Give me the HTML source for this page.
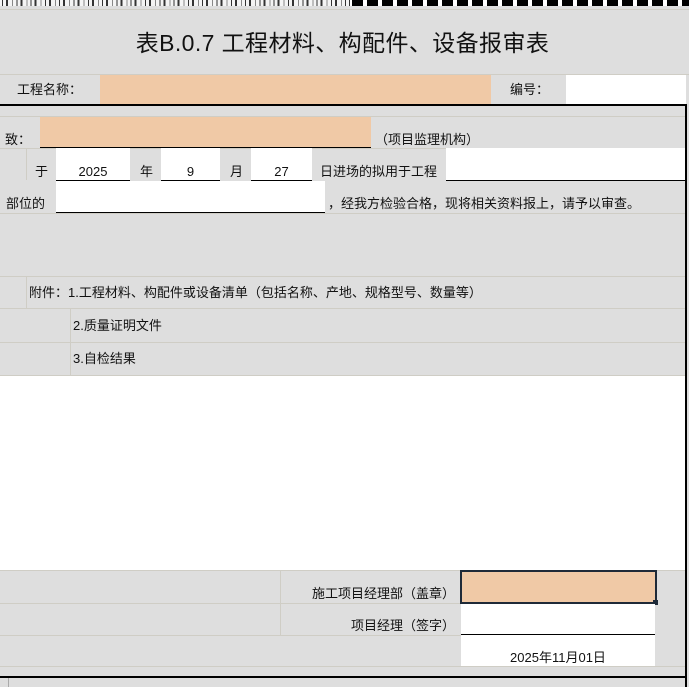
<!DOCTYPE html>
<html><head><meta charset="utf-8"><style>
*{margin:0;padding:0;box-sizing:border-box}
body{width:689px;height:687px;position:relative;overflow:hidden;background:#dedede;font-family:"Liberation Sans","Noto Sans CJK SC","WenQuanYi Zen Hei",sans-serif;font-size:13px;color:#111}
.a{position:absolute}
.t{position:absolute;white-space:nowrap;line-height:15px}
.hl{position:absolute;height:1px;background:#cfcdc5}
.vl{position:absolute;width:1px;background:#cfcdc5}
.peach{position:absolute;background:#f0c9a6}
.w{position:absolute;background:#fff}
.ul{border-bottom:1px solid #000}
</style></head><body>
<div class="a" style="left:0;top:0;width:689px;height:6px;background:repeating-linear-gradient(90deg,#f4f4f4 0 2px,#333 2px 3px,#f4f4f4 3px 6px,#333 6px 8px,#f4f4f4 8px 12px,#888 12px 13px,#f4f4f4 13px 14.3px)"></div>
<div class="a" style="left:350px;top:0;width:339px;height:6px;background:repeating-linear-gradient(90deg,#fff 0 2px,#000 2px 13px,#fff 13px 15px)"></div>
<div class="hl" style="left:0;top:9px;width:689px"></div>

<div class="t" style="left:0;width:685px;top:29px;text-align:center;font-size:23px;line-height:28px;letter-spacing:0.4px">表B.0.7 工程材料、构配件、设备报审表</div>

<div class="hl" style="left:0;top:74px;width:689px"></div>
<div class="t" style="left:17px;top:82px">工程名称：</div>
<div class="peach" style="left:100px;top:75px;width:391px;height:30px"></div>
<div class="t" style="left:510px;top:82px">编号：</div>
<div class="w" style="left:566px;top:75px;width:120px;height:30px"></div>

<div class="a" style="left:0;top:104px;width:687px;height:2px;background:#000"></div>
<div class="a" style="left:685px;top:104px;width:2px;height:583px;background:#000"></div>

<div class="hl" style="left:0;top:116px;width:685px"></div>
<div class="t" style="left:5px;top:132px">致：</div>
<div class="peach ul" style="left:40px;top:117px;width:331px;height:31px"></div>
<div class="t" style="left:375px;top:132px">（项目监理机构）</div>

<div class="hl" style="left:0;top:148px;width:685px"></div>
<div class="vl" style="left:26px;top:148px;height:32px"></div>
<div class="t" style="left:35px;top:164px">于</div>
<div class="w ul" style="left:56px;top:148px;width:74px;height:33px"></div>
<div class="t" style="left:56px;width:74px;text-align:center;top:164px">2025</div>
<div class="t" style="left:140px;top:164px">年</div>
<div class="w ul" style="left:161px;top:148px;width:59px;height:33px"></div>
<div class="t" style="left:161px;width:59px;text-align:center;top:164px">9</div>
<div class="t" style="left:230px;top:164px">月</div>
<div class="w ul" style="left:251px;top:148px;width:61px;height:33px"></div>
<div class="t" style="left:251px;width:61px;text-align:center;top:164px">27</div>
<div class="t" style="left:320px;top:164px">日进场的拟用于工程</div>
<div class="w ul" style="left:446px;top:148px;width:239px;height:33px"></div>

<div class="t" style="left:6px;top:196px">部位的</div>
<div class="w ul" style="left:56px;top:181px;width:269px;height:32px"></div>
<div class="t" style="left:328px;top:196px">，经我方检验合格，现将相关资料报上，请予以审查。</div>
<div class="hl" style="left:0;top:213px;width:685px"></div>

<div class="hl" style="left:0;top:276px;width:685px"></div>
<div class="vl" style="left:26px;top:276px;height:32px"></div>
<div class="t" style="left:29px;top:285px">附件：1.工程材料、构配件或设备清单（包括名称、产地、规格型号、数量等）</div>
<div class="hl" style="left:0;top:308px;width:685px"></div>
<div class="vl" style="left:70px;top:308px;height:67px"></div>
<div class="t" style="left:73px;top:318px">2.质量证明文件</div>
<div class="hl" style="left:0;top:342px;width:685px"></div>
<div class="t" style="left:73px;top:351px">3.自检结果</div>
<div class="hl" style="left:0;top:375px;width:685px"></div>
<div class="w" style="left:0;top:376px;width:685px;height:194px"></div>

<div class="hl" style="left:0;top:570px;width:685px"></div>
<div class="vl" style="left:280px;top:570px;height:65px"></div>
<div class="t" style="left:250px;width:205px;text-align:right;top:586px">施工项目经理部（盖章）</div>
<div class="peach" style="left:460px;top:570px;width:197px;height:34px;border:2px solid #1f2a38"></div>
<div class="a" style="left:653px;top:600px;width:5px;height:5px;background:#1f2a38"></div>
<div class="hl" style="left:0;top:603px;width:460px"></div>
<div class="t" style="left:250px;width:205px;text-align:right;top:618px">项目经理（签字）</div>
<div class="w ul" style="left:461px;top:604px;width:194px;height:31px"></div>
<div class="hl" style="left:0;top:635px;width:461px"></div>
<div class="w" style="left:461px;top:635px;width:194px;height:31px"></div>
<div class="t" style="left:461px;width:194px;text-align:center;top:650px">2025年11月01日</div>
<div class="hl" style="left:0;top:666px;width:685px"></div>
<div class="a" style="left:0;top:676px;width:687px;height:2px;background:#000"></div>
<div class="vl" style="left:8px;top:678px;height:9px;background:#aaa"></div>
</body></html>
